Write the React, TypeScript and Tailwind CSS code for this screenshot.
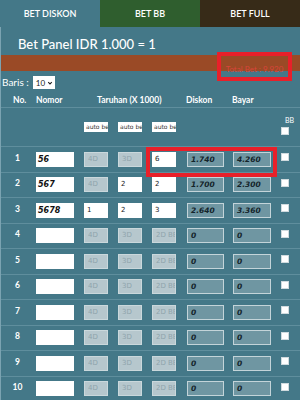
import React from 'react';

interface Row {
  no: number;
  nomor: string;
  d4: string;
  d3: string;
  d2: string;
  diskon: string;
  bayar: string;
}

const rows: Row[] = [
  { no: 1, nomor: '56', d4: '', d3: '', d2: '6', diskon: '1.740', bayar: '4.260' },
  { no: 2, nomor: '567', d4: '', d3: '2', d2: '2', diskon: '1.700', bayar: '2.300' },
  { no: 3, nomor: '5678', d4: '1', d3: '2', d2: '3', diskon: '2.640', bayar: '3.360' },
  ...[4, 5, 6, 7, 8, 9, 10].map((n) => ({ no: n, nomor: '', d4: '', d3: '', d2: '', diskon: '0', bayar: '0' })),
];

const Disabled = ({ label }: { label: string }) => (
  <div className="h-[15px] w-[24px] bg-[#b6c7cd] border border-[#cad8dc] text-[#8ea4ac] text-[7px] leading-[13px] pl-[3px] overflow-hidden whitespace-nowrap font-['DejaVu_Sans',sans-serif]">
    {label}
  </div>
);

const Small = ({ value }: { value: string }) => (
  <div className="h-[15px] w-[24px] bg-white text-[#222] text-[7px] leading-[15px] pl-[3px] font-['DejaVu_Sans',sans-serif]">
    {value}
  </div>
);

const Money = ({ value, w }: { value: string; w: string }) => (
  <div className={`h-[15px] ${w} bg-[#6f96a2] border border-[#c3d4d9] text-[#14242a] text-[7.5px] leading-[13px] pl-[3px] font-bold italic font-['DejaVu_Sans',sans-serif]`}>
    {value}
  </div>
);

const Check = () => <div className="w-[8px] h-[8px] bg-white border border-[#cfdade]" />;

const App = () => {
  return (
    <div className="relative w-[300px] h-[400px] overflow-hidden bg-[#447888] text-white font-['Lato',sans-serif]">
      <div className="flex h-[27px] text-[9px] font-semibold">
        <div className="w-[100px] flex items-center justify-center bg-[#447888]">BET DISKON</div>
        <div className="w-[100px] flex items-center justify-center bg-[#2f5e2e]">BET BB</div>
        <div className="w-[100px] flex items-center justify-center bg-[#372b18]">BET FULL</div>
      </div>

      <div className="border-l border-[#7ba3b1]">
        <div className="h-[28px] pl-[17px] pt-[9px] text-[13px] leading-[16px] font-medium">Bet Panel IDR 1.000 = 1</div>
        <div className="h-[16px] bg-[#9a4a26]" />

        <div className="flex items-center h-[22px] pt-[1px] text-[10px]">
          <span className="pl-[1px]">Baris :</span>
          <div className="ml-[4px] flex items-center gap-[2px] h-[13px] w-[22px] bg-white text-[#222] text-[8px] pl-[3px]">
            10
            <svg width="6" height="6" viewBox="0 0 10 10">
              <path d="M2 3.5l3 3 3-3" stroke="#222" strokeWidth="1.8" fill="none" />
            </svg>
          </div>
        </div>

        <div className="grid grid-cols-[35px_48px_102px_46px_48px_1fr] h-[15px] items-center text-[8.5px] font-bold border-b border-[#5f8e9d]">
          <div className="pl-[12px]">No.</div>
          <div>Nomor</div>
          <div className="pl-[13px]">Taruhan (X 1000)</div>
          <div>Diskon</div>
          <div>Bayar</div>
          <div />
        </div>

        <div className="grid grid-cols-[35px_48px_34px_34px_35px_46px_48px_1fr] h-[39px] items-center border-b border-[#5f8e9d]">
          <div />
          <div />
          {[0, 1, 2].map((i) => (
            <div key={i} className="h-[10px] w-[24px] bg-white text-[#333] text-[6px] leading-[10px] pl-[2px] overflow-hidden whitespace-nowrap font-['DejaVu_Sans',sans-serif]">
              auto bet
            </div>
          ))}
          <div />
          <div />
          <div className="flex flex-col items-start -mt-[4px]">
            <span className="text-[7px] leading-[9px] pl-[4px]">BB</span>
            <div className="mt-[2px]"><Check /></div>
          </div>
        </div>

        {rows.map((r) => (
          <div key={r.no} className="grid grid-cols-[35px_48px_34px_34px_35px_46px_48px_1fr] h-[25.5px] items-center border-b border-[#5f8e9d]">
            <div className="text-center text-[8.5px] font-bold pr-[2px] -mt-[2px]">{r.no}</div>
            <div className="h-[15px] w-[38px] bg-white text-[#111] text-[8px] leading-[15px] pl-[2px] font-bold italic font-['DejaVu_Sans',sans-serif]">
              {r.nomor}
            </div>
            <div>{r.d4 ? <Small value={r.d4} /> : <Disabled label="4D" />}</div>
            <div>{r.d3 ? <Small value={r.d3} /> : <Disabled label="3D" />}</div>
            <div>{r.d2 ? <Small value={r.d2} /> : <Disabled label="2D BB" />}</div>
            <div><Money value={r.diskon} w="w-[37px]" /></div>
            <div><Money value={r.bayar} w="w-[38px]" /></div>
            <div className="-mt-[4px]"><Check /></div>
          </div>
        ))}
      </div>

      <div className="absolute left-[217px] top-[52px] w-[75px] h-[29px] border-[4px] border-[#e8202a] flex items-center justify-center pt-[4px]">
        <span className="text-[8px] text-[#d8453a] whitespace-nowrap">Total Bet : 9.920</span>
      </div>
      <div className="absolute left-[146px] top-[147px] w-[131px] h-[30px] border-[4px] border-[#e8202a]" />
    </div>
  );
};

export default App;
